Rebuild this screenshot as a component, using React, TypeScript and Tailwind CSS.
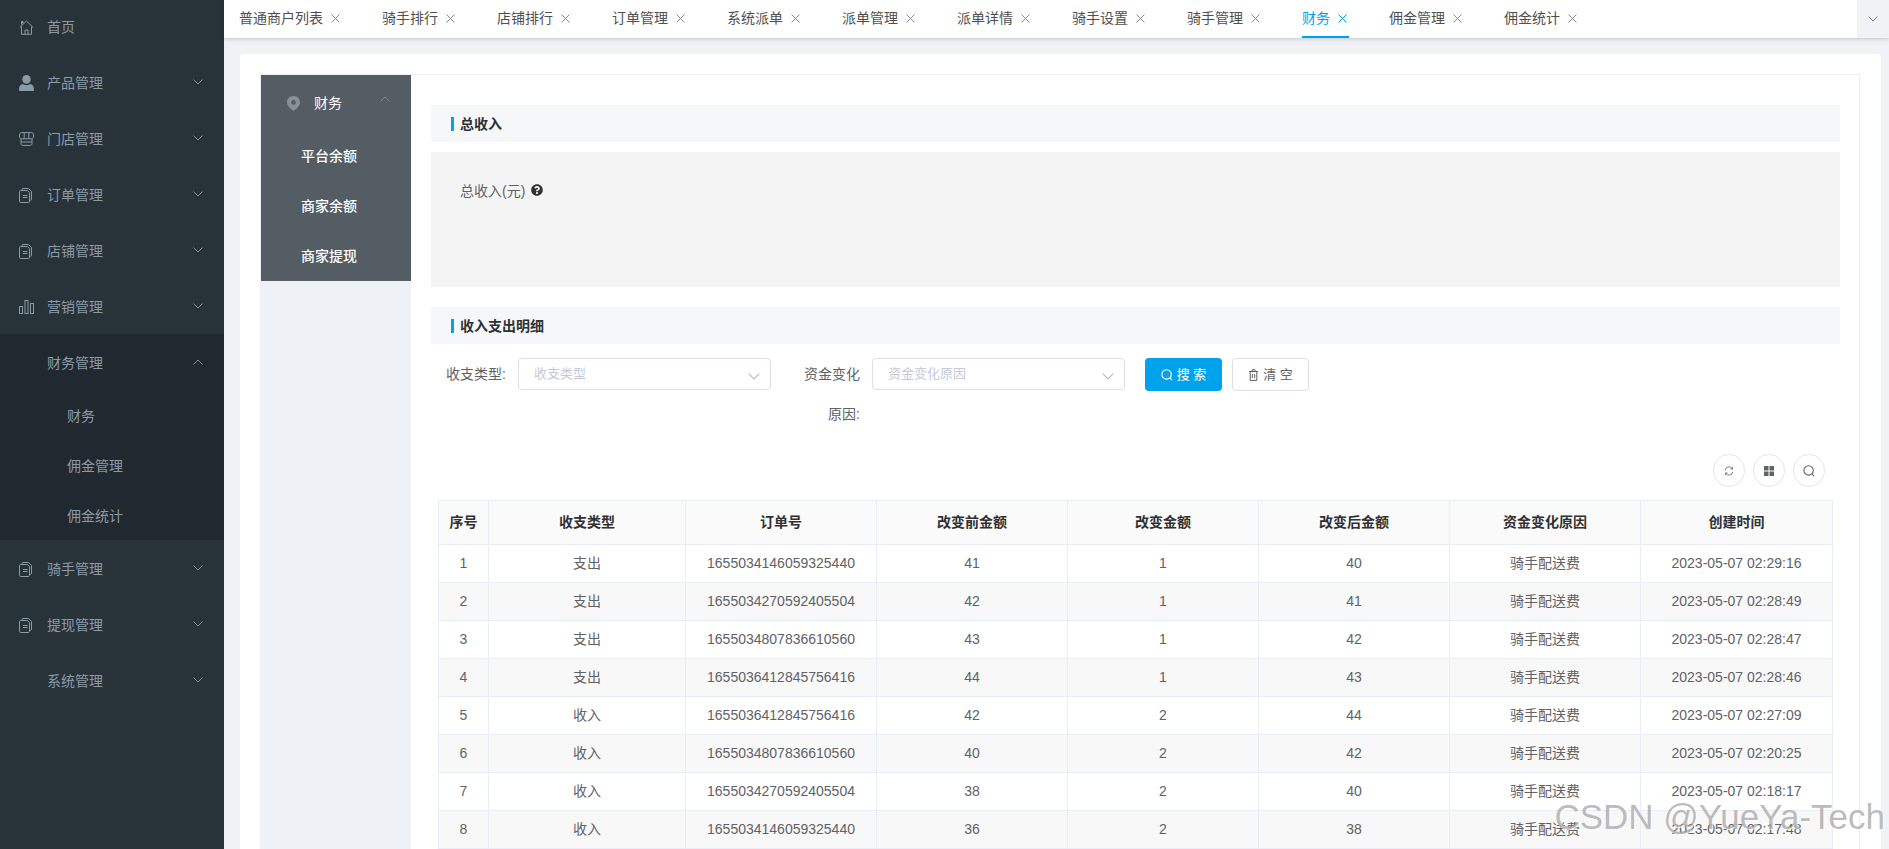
import { FaQuestionCircle } from "react-icons/fa";

const font = "font-['Liberation_Sans','Noto_Sans_CJK_SC',sans-serif]";

const tabs = [
  "普通商户列表",
  "骑手排行",
  "店铺排行",
  "订单管理",
  "系统派单",
  "派单管理",
  "派单详情",
  "骑手设置",
  "骑手管理",
  "财务",
  "佣金管理",
  "佣金统计",
];

const rows = [
  ["1", "支出", "1655034146059325440", "41", "1", "40", "2023-05-07 02:29:16"],
  ["2", "支出", "1655034270592405504", "42", "1", "41", "2023-05-07 02:28:49"],
  ["3", "支出", "1655034807836610560", "43", "1", "42", "2023-05-07 02:28:47"],
  ["4", "支出", "1655036412845756416", "44", "1", "43", "2023-05-07 02:28:46"],
  ["5", "收入", "1655036412845756416", "42", "2", "44", "2023-05-07 02:27:09"],
  ["6", "收入", "1655034807836610560", "40", "2", "42", "2023-05-07 02:20:25"],
  ["7", "收入", "1655034270592405504", "38", "2", "40", "2023-05-07 02:18:17"],
  ["8", "收入", "1655034146059325440", "36", "2", "38", "2023-05-07 02:17:48"],
];

const headers = ["序号", "收支类型", "订单号", "改变前金额", "改变金额", "改变后金额", "资金变化原因", "创建时间"];

function HomeIcon() {
  return (
    <svg width="15" height="15" viewBox="0 0 15 15" fill="none" stroke="currentColor" strokeWidth="1">
      <path d="M0.8 7.5 7.5 1l6.7 6.5" />
      <path d="M2.5 6.5v7.8h10V6.5" />
      <path d="M6 14.3V10h3v4.3" />
      <path d="M2.5 4.5V1.5h1.5v1.5" fill="currentColor" />
    </svg>
  );
}

function UserIcon() {
  return (
    <svg width="15" height="16" viewBox="0 0 15 16" fill="currentColor">
      <ellipse cx="7.5" cy="4.4" rx="4.2" ry="4.4" />
      <path d="M0 15.2c0-3.6 1-5.6 3.6-6.1 2.4 1.4 5.400 1.400 7.800 0 2.600.5 3.600 2.500 3.600 6.100 0 .5-.4.800-.9.800H.9c-.5 0-.9-.3-.9-.8z" />
    </svg>
  );
}

function StoreIcon() {
  return (
    <svg width="15" height="14" viewBox="0 0 15 14" fill="none" stroke="currentColor" strokeWidth="1">
      <path d="M2.500 0.600h10c1.300 0 2 1 2 2.400v2c0 1-.8 1.800-1.700 1.800H2.200C1.300 6.800.5 6 .5 5V3C.5 1.600 1.200.6 2.500.6z" />
      <path d="M5.200.8v6M9.800.8v6" />
      <path d="M2 7v4.600c0 1 .6 1.800 1.500 1.800h8c.9 0 1.500-.8 1.500-1.800V7" />
      <path d="M2 10h11" />
    </svg>
  );
}

function FilesIcon() {
  return (
    <svg width="13" height="15" viewBox="0 0 13 15" fill="none" stroke="currentColor" strokeWidth="1">
      <path d="M3 2.500V1.500C3 1 3.400.5 4 .5h5.500l3 3v7.700c0 .6-.4 1.100-1 1.100H10.500" />
      <path d="M1.700 2.500h6.800l2 2v8.800c0 .7-.5 1.200-1.200 1.200H1.700C1 14.500.5 14 .5 13.300V3.700c0-.7.5-1.200 1.200-1.200z" />
      <path d="M4 7.500h4.500M4 9.500h4.500" />
    </svg>
  );
}

function BarsIcon() {
  return (
    <svg width="15" height="14" viewBox="0 0 15 14" fill="none" stroke="currentColor" strokeWidth="1">
      <rect x="0.500" y="6.500" width="3" height="7" />
      <rect x="6" y="0.500" width="3" height="13" />
      <rect x="11.500" y="3.500" width="3" height="10" />
    </svg>
  );
}

function PinIcon() {
  return (
    <svg width="13" height="15" viewBox="0 0 13 15" className="text-[#8b9096]">
      <path
        fillRule="evenodd"
        fill="currentColor"
        d="M6.500 0C10.100 0 13 2.800 13 6.300c0 3.800-3.900 7-6.500 8.700C3.900 13.300 0 10.100 0 6.300 0 2.800 2.900 0 6.500 0zm0 4.100a2.300 2.300 0 1 0 0 4.600 2.300 2.300 0 0 0 0-4.600z"
      />
    </svg>
  );
}

function Chevron({ up, className }: { up?: boolean; className?: string }) {
  return (
    <svg width="10" height="6" viewBox="0 0 10 6" fill="none" stroke="currentColor" strokeWidth="1" className={className}>
      <path d={up ? "M0.500 5.500 5 1l4.500 4.500" : "M0.500 0.500 5 5l4.500-4.500"} />
    </svg>
  );
}

function Close({ className }: { className?: string }) {
  return (
    <svg width="9" height="9" viewBox="0 0 9 9" fill="none" stroke="currentColor" strokeWidth="1" className={className}>
      <path d="M0.500 0.500l8 8M8.500 0.500l-8 8" />
    </svg>
  );
}

function SearchIcon({ size = 12 }: { size?: number }) {
  return (
    <svg width={size} height={size} viewBox="0 0 12 12" fill="none" stroke="currentColor" strokeWidth="1.100">
      <circle cx="5.600" cy="5.400" r="4.700" />
      <path d="M9 9l2 2.200" />
    </svg>
  );
}

function TrashIcon() {
  return (
    <svg width="11" height="12" viewBox="0 0 11 12" fill="none" stroke="currentColor" strokeWidth="1">
      <path d="M1 2.500h9M4 2.300V.8h3v1.500" />
      <path d="M2.200 2.500v8.900h6.600V2.500" />
      <path d="M4.300 5v4M6.700 5v4" />
    </svg>
  );
}

function RefreshIcon() {
  return (
    <svg width="10" height="10" viewBox="0 0 12 12" fill="none" stroke="currentColor" strokeWidth="1">
      <path d="M1.500 5A4.500 4.500 0 0 1 9.800 3.200" />
      <path d="M10.500 7A4.500 4.500 0 0 1 2.200 8.800" />
      <path d="M10.300 1v2.600H7.700M1.700 11V8.400h2.600" />
    </svg>
  );
}

function GridIcon() {
  return (
    <svg width="10" height="10" viewBox="0 0 10 10" fill="currentColor">
      <rect width="4.500" height="4.500" />
      <rect x="5.500" width="4.500" height="4.500" />
      <rect y="5.500" width="4.500" height="4.500" />
      <rect x="5.500" y="5.500" width="4.500" height="4.500" />
    </svg>
  );
}

function NavItem({ icon, label, up }: { icon?: React.ReactNode; label: string; up?: boolean }) {
  return (
    <div className="flex h-14 items-center pl-[19px] pr-[21px] pt-[2px] text-[#8b9aa7]">
      <span className="flex w-[28px] items-center">{icon}</span>
      <span className="flex-1">{label}</span>
      {label !== "首页" && <Chevron up={up} className="-mt-[3px] text-[#7e8c98]" />}
    </div>
  );
}

function SectionTitle({ children }: { children: React.ReactNode }) {
  return (
    <div className="flex h-[37px] items-center bg-[#f6f7f9] pl-5 pt-[1px] text-[14px] font-bold text-[#303133]">
      <span className="mr-[6px] h-[14px] w-[3px] bg-[#00a3eb]" />
      {children}
    </div>
  );
}

function FakeSelect({ placeholder }: { placeholder: string }) {
  return (
    <div className="mt-1 flex h-8 w-[253px] items-center justify-between rounded border border-[#dcdfe6] pl-[15px] pr-[10px] text-[13px] text-[#c4c9d3]">
      {placeholder}
      <Chevron className="mt-1 h-[7px] w-3 text-[#b5bac4]" />
    </div>
  );
}

function ToolButton({ children }: { children: React.ReactNode }) {
  return (
    <div className="flex h-[33px] w-8 items-center justify-center rounded-full border border-[#e4e6ee] text-[#606266]">
      {children}
    </div>
  );
}

export default function App() {
  return (
    <div className={`relative flex h-[849px] overflow-hidden bg-[#f0f2f5] text-[14px] ${font}`}>
      {/* Sidebar */}
      <aside className="-mt-[2px] w-[224px] shrink-0 bg-[#283239]">
        <NavItem icon={<HomeIcon />} label="首页" />
        <NavItem icon={<UserIcon />} label="产品管理" />
        <NavItem icon={<StoreIcon />} label="门店管理" />
        <NavItem icon={<FilesIcon />} label="订单管理" />
        <NavItem icon={<FilesIcon />} label="店铺管理" />
        <NavItem icon={<BarsIcon />} label="营销管理" />
        <div className="bg-[#20292f]">
          <NavItem label="财务管理" up />
          {["财务", "佣金管理", "佣金统计"].map((s) => (
            <div key={s} className="flex h-[50px] items-center pl-[67px] pt-[2px] text-[#8b9aa7]">
              {s}
            </div>
          ))}
        </div>
        <NavItem icon={<FilesIcon />} label="骑手管理" />
        <NavItem icon={<FilesIcon />} label="提现管理" />
        <NavItem label="系统管理" />
      </aside>

      <div className="flex min-w-0 flex-1 flex-col">
        {/* Tabs */}
        <div className="relative flex h-[38px] shrink-0 bg-white shadow-[0_1px_4px_rgba(0,21,41,0.2)]">
          <div className="flex flex-1 gap-10 pl-[15px]">
            {tabs.map((t) => (
              <div
                key={t}
                className={
                  t === "财务"
                    ? "flex h-[38px] items-center border-b-2 border-[#00a3eb] text-[#00a3eb]"
                    : "flex h-[38px] items-center text-[#4f4f4f]"
                }
              >
                <span className={t === "财务" ? "" : "-mt-[2px]"}>{t}</span>
                <Close className={t === "财务" ? "ml-2 mr-[2px]" : "-mt-[2px] ml-2 mr-[2px] text-[#85888c]"} />
              </div>
            ))}
          </div>
          <div className="flex w-8 items-center justify-center bg-[#f0f2f5] text-[#7d8590]">
            <Chevron />
          </div>
        </div>

        {/* Content */}
        <div className="flex min-h-0 flex-1 pl-4 pr-2 pt-4">
          <div className="flex min-w-0 flex-1 flex-col rounded-t bg-white pl-5 pr-[21px] pt-5">
            <div className="flex min-h-0 flex-1 border border-b-0 border-[#eceef2]">
              {/* Side menu */}
              <div className="w-[150px] shrink-0 bg-[#eef1f6]">
                <div className="bg-[#545c64] text-white">
                  <div className="flex h-14 items-center pl-[26px] pr-[21px]">
                    <PinIcon />
                    <span className="ml-[14px] flex-1">财务</span>
                    <Chevron up className="-mt-2 text-[#7b828a]" />
                  </div>
                  {["平台余额", "商家余额", "商家提现"].map((s) => (
                    <div key={s} className="flex h-[50px] items-center pl-10 font-medium">
                      {s}
                    </div>
                  ))}
                </div>
              </div>

              {/* Main panel */}
              <div className="min-w-0 flex-1 pl-5 pr-[19px] pt-[30px]">
                <SectionTitle>总收入</SectionTitle>
                <div className="mt-[10px] h-[135px] bg-[#f4f4f5] pl-[29px] pt-[29px] text-[#606266]">
                  <div className="flex items-start">
                    <span className="leading-[20px]">总收入(元)</span>
                    <FaQuestionCircle className="ml-[6px] mt-[3px] text-[12px] text-[#303133]" />
                  </div>
                </div>

                <div className="mt-5">
                  <SectionTitle>收入支出明细</SectionTitle>
                </div>

                {/* Filters */}
                <div className="mt-[10px] flex items-start pl-[7px] text-[#606266]">
                  <label className="w-20 pr-3 text-right leading-[40px]">收支类型:</label>
                  <FakeSelect placeholder="收支类型" />
                  <label className="ml-[21px] w-20 pr-3 text-right leading-[40px]">资金变化原因:</label>
                  <FakeSelect placeholder="资金变化原因" />
                  <button className="ml-5 mt-1 flex h-[33px] w-[77px] items-center justify-center gap-1 rounded bg-[#00a3eb] text-[13px] text-white">
                    <SearchIcon />
                    搜 索
                  </button>
                  <button className="ml-[10px] mt-1 flex h-[33px] w-[77px] items-center justify-center gap-1 rounded border border-[#dcdfe6] bg-white text-[13px] text-[#606266]">
                    <TrashIcon />
                    清 空
                  </button>
                </div>

                {/* Table toolbar */}
                <div className="mt-5 flex justify-end gap-2 pr-[15px]">
                  <ToolButton>
                    <RefreshIcon />
                  </ToolButton>
                  <ToolButton>
                    <GridIcon />
                  </ToolButton>
                  <ToolButton>
                    <SearchIcon />
                  </ToolButton>
                </div>

                {/* Table */}
                <table className="ml-[7px] mt-[13px] w-[1394px] table-fixed border-collapse text-center">
                  <colgroup>
                    <col className="w-[50px]" />
                    <col className="w-[197px]" />
                    <col className="w-[191px]" />
                    <col className="w-[191px]" />
                    <col className="w-[191px]" />
                    <col className="w-[191px]" />
                    <col className="w-[191px]" />
                    <col className="w-[192px]" />
                  </colgroup>
                  <thead>
                    <tr className="h-[44px] bg-[#fafafa]">
                      {headers.map((h) => (
                        <th key={h} className="border border-[#e9edf5] font-bold text-[#303133]">
                          {h}
                        </th>
                      ))}
                    </tr>
                  </thead>
                  <tbody>
                    {rows.map((r, i) => (
                      <tr key={r[0]} className={i % 2 === 1 ? "h-[38px] bg-[#f8f8f8]" : "h-[38px] bg-white"}>
                        {r.slice(0, 6).map((c, j) => (
                          <td key={j} className="border border-[#e9edf5] text-[#606266]">
                            {c}
                          </td>
                        ))}
                        <td className="border border-[#e9edf5] text-[#606266]">骑手配送费</td>
                        <td className="border border-[#e9edf5] text-[#606266]">{r[6]}</td>
                      </tr>
                    ))}
                  </tbody>
                </table>
              </div>
            </div>
          </div>
        </div>
      </div>

      {/* Watermark */}
      <div className="pointer-events-none absolute bottom-[15px] right-[4px] text-[35px] leading-none text-[#8f8f8f]/60 [text-shadow:1px_1px_1px_rgba(255,255,255,0.8)]">
        CSDN @YueYa-Tech
      </div>
    </div>
  );
}
